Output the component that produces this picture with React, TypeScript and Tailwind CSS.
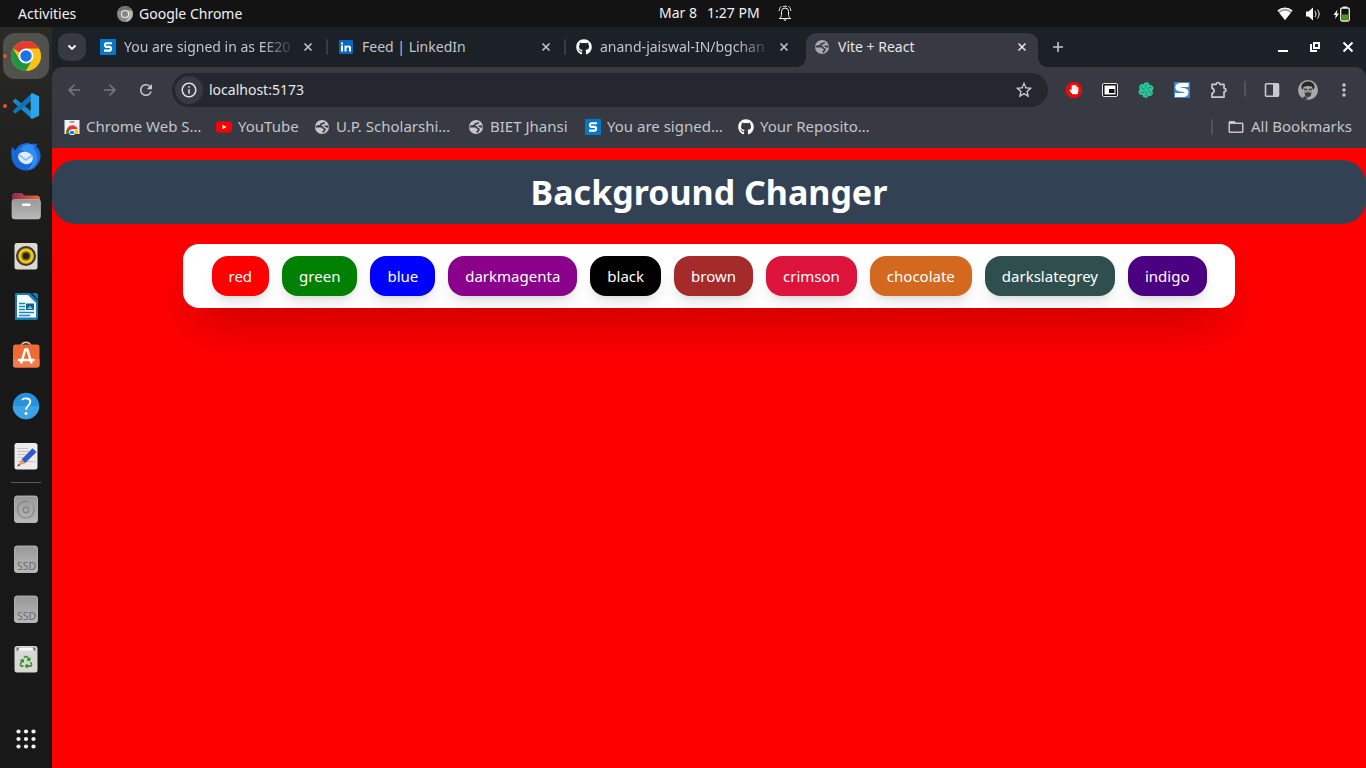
import React from "react";
import { FaGithub, FaHandPaper, FaRecycle } from "react-icons/fa";
import { MdStarBorder, MdRefresh, MdArrowBack, MdArrowForward, MdMoreVert, MdInfoOutline, MdFolderOpen } from "react-icons/md";

type IconProps = { className?: string };

const Globe = ({ className = "" }: IconProps) => (
  <svg viewBox="0 0 16 16" className={`size-4 shrink-0 ${className}`} aria-hidden="true">
    <circle cx="8" cy="8" r="7" fill="currentColor" />
    <path
      d="M10.600 3.200c-.6 1.500-1.600 1.600-3 1.600-.9 0-.4 1.300-1.400 1.700-1 .3-3.400.3-3.700 1.200h5c1.500 0 1.100 1.700 2.300 1.800 1.300.1 1.400 1.200.600 2.200L8.700 13.300"
      fill="none"
      stroke="#3a3c44"
      strokeWidth="1.700"
    />
    <path d="M10 6.500c1-.2 2.500.2 4.200 0l.3 2.200c-1.700.3-3.500-.5-4.500-2.200z" fill="#3a3c44" />
  </svg>
);

const SLogo = () => (
  <svg viewBox="0 0 16 16" className="size-4 shrink-0" aria-hidden="true">
    <rect width="16" height="16" fill="#0378c8" />
    <path d="M12 4.200H6L5 5.200v1.700l1 1h4l1 1v1.700l-1 1H4" fill="none" stroke="#fff" strokeWidth="2.100" />
  </svg>
);

const LinkedIn = () => (
  <svg viewBox="0 0 16 16" className="size-4 shrink-0" aria-hidden="true">
    <rect x="1" y="1" width="14" height="14" rx="1" fill="#0a66c2" />
    <path d="M3 6.500h2v6H3zM3 3.500h2v2H3zM6.500 6.500h1.900v.8c.9-1.400 4.600-1.400 4.600 1.500v3.700h-2V9.400c0-1.600-2.500-1.600-2.500 0v3.100h-2z" fill="#fff" />
  </svg>
);

const YouTube = () => (
  <svg viewBox="0 0 16 16" className="size-4 shrink-0" aria-hidden="true">
    <rect y="2.500" width="16" height="11" rx="3" fill="#f00" />
    <path d="M6.500 5.700v4.600l4-2.300z" fill="#fff" />
  </svg>
);

const ChromeWheel = () => (
  <g>
    <circle cx="16" cy="16" r="15" fill="#fbc116" />
    <path d="M16 16 3 8.500A15 15 0 0 1 29 8.500H16z" fill="#e33b2e" />
    <path d="M3 8.500A15 15 0 0 0 16 31l6.500-11.300L16 16 9.500 19.800z" fill="#229342" />
    <path d="M16 9h13a15 15 0 0 1-13 22l6.500-11.300z" fill="#fbc116" />
    <circle cx="16" cy="16" r="7.500" fill="#fff" />
    <circle cx="16" cy="16" r="5.700" fill="#1a73e8" />
  </g>
);

const WebStore = () => (
  <svg viewBox="0 0 16 16" className="size-4 shrink-0" aria-hidden="true">
    <rect x=".5" y="1" width="15" height="14" fill="#f1f1f1" />
    <rect x="5.500" y="2.200" width="5" height="1.300" rx=".6" fill="#777" />
    <path d="M2.300 15C1.500 5.500 11 3.500 13.700 10H8z" fill="#e33b2e" />
    <path d="M2.300 15c-.2-2 .1-3.500.8-5l3.400 5z" fill="#229342" />
    <path d="M8 10.500h5.900c.4 1.500.4 3 0 4.500H9z" fill="#fbc116" />
    <circle cx="8" cy="13.500" r="2.900" fill="#fff" />
    <path d="M5.900 15a2.300 2.300 0 1 1 4.200 0z" fill="#1a73e8" />
  </svg>
);

const Cross = ({ className = "" }: IconProps) => (
  <svg viewBox="0 0 16 16" className={`size-4 shrink-0 ${className}`} aria-hidden="true">
    <path d="m4.500 4.500 7 7m0-7-7 7" stroke="currentColor" strokeWidth="1.600" />
  </svg>
);

const tabs = [
  { title: "You are signed in as EE20", icon: <SLogo />, fade: true },
  { title: "Feed | LinkedIn", icon: <LinkedIn />, fade: false },
  { title: "anand-jaiswal-IN/bgchan", icon: <FaGithub className="size-4 shrink-0 text-white" />, fade: true },
];

const bookmarks = [
  { title: "Chrome Web S…", icon: <WebStore />, width: "w-[152px]" },
  { title: "YouTube", icon: <YouTube />, width: "w-[98px]" },
  { title: "U.P. Scholarshi…", icon: <Globe className="text-[#c4c6cc]" />, width: "w-[154px]" },
  { title: "BIET Jhansi", icon: <Globe className="text-[#c4c6cc]" />, width: "w-[117px]" },
  { title: "You are signed…", icon: <SLogo />, width: "w-[153px]" },
  { title: "Your Reposito…", icon: <FaGithub className="size-4 shrink-0 text-white" />, width: "w-[140px]" },
];

const colours = [
  { name: "red", fill: "bg-[red]" },
  { name: "green", fill: "bg-[green]" },
  { name: "blue", fill: "bg-[blue]" },
  { name: "darkmagenta", fill: "bg-[darkmagenta]" },
  { name: "black", fill: "bg-black" },
  { name: "brown", fill: "bg-[brown]" },
  { name: "crimson", fill: "bg-[crimson]" },
  { name: "chocolate", fill: "bg-[chocolate]" },
  { name: "darkslategrey", fill: "bg-[darkslategrey]" },
  { name: "indigo", fill: "bg-[indigo]" },
];

const Drive = ({ children }: { children: React.ReactNode }) => (
  <g>
    <rect x="4.500" y="3" width="23" height="26.500" rx="2.500" fill="url(#drive)" stroke="#c4c4c4" strokeWidth=".8" />
    {children}
  </g>
);

const ssd = (
  <Drive>
    <text x="7" y="26.500" fontSize="10.500" fill="#6b6b6b" fontFamily="Noto Sans, sans-serif">SSD</text>
  </Drive>
);

const apps = [
  { name: "Google Chrome", art: <ChromeWheel />, running: true, active: true },
  {
    name: "Visual Studio Code",
    running: true,
    art: (
      <g>
        <path d="m3 10.500 2.300-2 17 13.500v7.200L3.200 12z" fill="#1a86cc" />
        <path d="m3 21.800 2.300 2L22.300 10V3L3.200 20.400z" fill="#0b74bd" />
        <path d="m22 3 7 3.200v19.600l-7 3.200-1.300-1.200V4.200z" fill="#2aa5ee" />
      </g>
    ),
  },
  {
    name: "Thunderbird",
    art: (
      <g>
        <path d="M1.500 14c-1-3 .5-6 1.500-7.500.3 2 1 3 2.500 3.500 3-5.500 10-9 16-6 2-.3 5-.5 6.500 1-1 0-2 .3-2 1 3.500 3 5 7 4.500 11C29.500 25.500 23 31 15.500 30.500 7 30 .500 23 1.500 14z" fill="#1968d9" />
        <path d="M10 10c4-7 11-7 16-3-2-.5-3 0-3 1 8 8 5 19-5 22 8-9 5-17-8-20z" fill="#2f8df2" />
        <path d="M8.500 14.500c3-4.500 12-3 14 2 1.500 5-3 8.500-7.500 7.500s-8-5-6.500-9.500z" fill="#dcecfb" />
        <path d="m9 14.500 6.500 5.500 7-4.500" fill="none" stroke="#8db9e7" strokeWidth="1.500" />
      </g>
    ),
  },
  {
    name: "Files",
    art: (
      <g>
        <path d="M2 7a3 3 0 0 1 3-4h7l2.500 2.500H27A3 3 0 0 1 30 8v10H2z" fill="url(#folder)" />
        <rect x="2" y="9.500" width="28.500" height="19.500" rx="2.500" fill="url(#drive)" stroke="#bdbdbd" strokeWidth=".6" />
        <rect x="12" y="13.500" width="8.500" height="2.500" rx="1" fill="#fff" />
      </g>
    ),
  },
  {
    name: "Rhythmbox",
    art: (
      <g>
        <rect x="4.500" y="3" width="23" height="26.500" rx="2.500" fill="#ddd9d1" />
        <circle cx="16" cy="16" r="10" fill="#3b3a38" />
        <circle cx="16" cy="16" r="7.800" fill="#f3c511" />
        <circle cx="16" cy="16" r="4.800" fill="#8d7210" />
        <circle cx="16" cy="16" r="3.300" fill="#222" />
      </g>
    ),
  },
  {
    name: "LibreOffice Writer",
    art: (
      <g>
        <path d="M6 3h14l8 8v17a2 2 0 0 1-2 2H6a1 1 0 0 1-1-1V4a1 1 0 0 1 1-1z" fill="#137eb5" />
        <path d="M7 5h11l8 8v14.500H7z" fill="#f5fbff" />
        <path d="M22 3h4a2 2 0 0 1 2 2v5z" fill="#137eb5" />
        <path d="M9 13.500h6m-6 3h6m-6 3h6m-6 3h15m-15 3h11" stroke="#1887bd" strokeWidth="1.500" />
        <rect x="16" y="13.500" width="8" height="6.500" fill="#155e89" />
        <path d="m17 19 3-3 3 3z" fill="#7cc7ea" />
      </g>
    ),
  },
  {
    name: "Ubuntu Software",
    art: (
      <g>
        <path d="M11 6.500c0-5.500 10-5.500 10 0" fill="none" stroke="#d9c7a6" strokeWidth="1.600" />
        <rect x="3" y="4.500" width="26.500" height="23" rx="2.500" fill="#f06a33" />
        <path d="M3 19h26.500v6a2.500 2.500 0 0 1-2.500 2.500H5.500A2.500 2.500 0 0 1 3 25z" fill="#f47b47" />
        <path d="m11 23.500 4.300-14h2l4.300 14M8 20h16.500" fill="none" stroke="#fff" strokeWidth="2.500" />
      </g>
    ),
  },
  {
    name: "Help",
    art: (
      <g>
        <circle cx="16" cy="16" r="13.200" fill="#2692df" />
        <path d="M2.800 16a13.200 13.200 0 0 0 26.400 0z" fill="#3ba2e5" />
        <path d="M12 9.800c2-2 8.300-2.200 8.300 2 0 3.700-4.300 4-4.300 8" fill="none" stroke="#fff" strokeWidth="1.900" />
        <circle cx="16" cy="23.500" r="1.500" fill="#fff" />
      </g>
    ),
  },
  {
    name: "Text Editor",
    art: (
      <g>
        <rect x="4.500" y="3" width="23" height="26.500" rx="2.500" fill="#ecebe9" />
        <path d="M7.500 8.500H18m-10.500 3H19m-11.500 3h8m-8 3h6m-6 4h18" stroke="#c6c4bd" strokeWidth="1.200" />
        <path d="m11.500 19.500 11-11.300 4 3.800L15 23.300z" fill="#2e59d1" />
        <path d="m11.500 19.500 3.500 3.800-7.500 3z" fill="#e79b58" />
        <path d="m8.500 24 1.600 1.400-2.800 1.100z" fill="#333" />
      </g>
    ),
  },
];

const volumes = [
  {
    name: "Disk",
    art: (
      <Drive>
        <path d="M23 12.500A8.300 8.300 0 1 1 19 9" fill="none" stroke="#858585" strokeWidth="1.200" />
        <circle cx="16" cy="17" r="2.800" fill="none" stroke="#858585" strokeWidth="1.300" />
      </Drive>
    ),
  },
  { name: "SSD volume 1", art: ssd },
  { name: "SSD volume 2", art: ssd },
  {
    name: "Trash",
    art: (
      <g>
        <rect x="4.500" y="3" width="23" height="26.500" rx="2.500" fill="#d8d8d6" />
        <path d="M6.500 4.500h19v4l-2-2h-15l-2 2z" fill="#777" />
        <rect x="9" y="4.500" width="14" height="3" rx="1" fill="#fafafa" />
        <FaRecycle x="9.500" y="12.500" size={13} color="#2f9423" />
      </g>
    ),
  },
];

function DockItem({ name, art, running, active }: { name: string; art: React.ReactNode; running?: boolean; active?: boolean }) {
  return (
    <button aria-label={name} className="relative flex h-[50px] w-full items-center justify-center">
      <span className={`flex size-[46px] items-center justify-center rounded-xl ${active ? "bg-[#50504d]" : ""}`}>
        <svg viewBox="0 0 32 32" className="size-8" aria-hidden="true">{art}</svg>
      </span>
      {running && <span className="absolute left-[3px] top-[23px] size-1 rounded-full bg-[#e95420]" />}
    </button>
  );
}

function TopBar() {
  return (
    <header className="flex h-[27px] shrink-0 items-center bg-[#131313] text-sm text-[#f2f2f2]">
      <div className="flex flex-1 items-center pl-[18px]">
        <button className="w-[99px] text-left">Activities</button>
        <button className="flex items-center gap-1.5">
          <svg viewBox="0 0 16 16" className="size-4" aria-hidden="true">
            <circle cx="8" cy="8" r="8" fill="#8b8b8b" />
            <path d="M1 4.500a8 8 0 0 1 14 0H8z" fill="#707070" />
            <path d="M8 4.500h7A8 8 0 0 1 8.500 16l3-6z" fill="#b4b4b4" />
            <circle cx="8" cy="8" r="4" fill="#eee" />
            <circle cx="8" cy="8" r="3" fill="#858585" />
          </svg>
          Google Chrome
        </button>
      </div>
      <button className="flex items-center pb-0.5 pl-[84px]">
        <span className="w-12 text-left">Mar 8</span>
        <span className="w-[70px] text-left">1:27 PM</span>
        <svg viewBox="0 0 16 16" className="size-4" fill="none" stroke="#f2f2f2" aria-hidden="true">
          <path d="M2 13.500h12M3 13.200c1-1 1.500-2 1.500-4V6.500a3.500 3.500 0 0 1 7 0v2.700c0 2 .5 3 1.500 4M2.200 6c0-2 .8-3.500 2.200-4.700M13.800 6c0-2-.8-3.500-2.200-4.700M6 1.800c1-.9 3-.9 4 0" />
          <path d="M6 14.500h4L8 16z" fill="#f2f2f2" stroke="none" />
        </svg>
      </button>
      <div className="flex flex-1 items-center justify-end gap-3 pr-4">
        <svg viewBox="0 0 16 16" className="size-4" aria-hidden="true">
          <path d="M.8 5.200C5 1 11 1 15.200 5.200L8 14z" fill="#9b9b9b" />
          <path d="M2.500 7c3.500-3 7.500-3 11 0L8 14z" fill="#fff" />
          <path d="M.8 5C5 1.200 11 1.200 15.200 5" fill="none" stroke="#fff" strokeWidth="1.300" />
        </svg>
        <svg viewBox="0 0 16 16" className="size-4" fill="none" stroke="#fff" aria-hidden="true">
          <path d="M1 5.500h2.500L8 1.500v13L3.500 10.500H1z" fill="#fff" stroke="none" />
          <path d="M9.800 5c1.500 1.800 1.500 4.200 0 6M12.300 3.500c2.400 2.700 2.400 6.300 0 9" />
        </svg>
        <svg viewBox="0 0 17 16" className="h-4 w-[17px]" aria-hidden="true">
          <path d="M4.500 3.500.5 9h2.300l-.7 4L6 7.500H3.700z" fill="#fff" />
          <rect x="7.700" y="2" width="8.600" height="13" rx="1.500" fill="none" stroke="#eee" strokeWidth="1.300" />
          <path d="M10 .5h4V2h-4z" fill="#eee" />
          <path d="M9 8.500h6V14H9z" fill="#4e9a06" />
        </svg>
      </div>
    </header>
  );
}

function Dock() {
  return (
    <nav aria-label="Dock" className="flex w-[52px] shrink-0 flex-col items-center bg-linear-to-b from-[#2a2a26] via-[#171817] via-35% to-[#171817] pt-1 pb-1">
      <svg className="absolute size-0" aria-hidden="true">
        <defs>
          <linearGradient id="drive" x1="0" y1="0" x2="0" y2="1"><stop stopColor="#989898" /><stop offset="1" stopColor="#b9b9b9" /></linearGradient>
          <linearGradient id="folder"><stop stopColor="#8a2855" /><stop offset="1" stopColor="#ee6637" /></linearGradient>
        </defs>
      </svg>
      {apps.map((a) => <DockItem key={a.name} {...a} />)}
      <div className="my-px h-px w-[30px] shrink-0 bg-[#5a5a5a]" />
      {volumes.map((v) => <DockItem key={v.name} {...v} />)}
      <button aria-label="Show Applications" className="mt-auto flex h-[50px] w-full items-center justify-center">
        <svg viewBox="0 0 20 20" className="size-5" fill="#f3f3f3" aria-hidden="true">
          {[2.5, 10, 17.5].map((y) => [2.5, 10, 17.5].map((x) => <circle key={`${x}-${y}`} cx={x} cy={y} r="2.100" />))}
        </svg>
      </button>
    </nav>
  );
}

function TabStrip() {
  return (
    <div className="flex h-10 shrink-0 items-end bg-[#1c2027] pl-1.5 text-sm text-[#c3c5ca]">
      <button aria-label="Search tabs" className="mb-1.5 mr-1.5 flex size-7 shrink-0 items-center justify-center rounded-[10px] bg-[#383a43] text-white">
        <svg viewBox="0 0 16 16" className="size-4" fill="none" stroke="currentColor" strokeWidth="1.800" aria-hidden="true"><path d="m4.500 6.500 3.500 3.500 3.500-3.500" /></svg>
      </button>
      {tabs.map((t, i) => (
        <React.Fragment key={t.title}>
          <div className="flex h-[34px] w-[232px] items-center gap-1 px-2 pb-1.5">
            <div className="flex h-7 min-w-0 flex-1 items-center gap-2">
              {t.icon}
              <span className={`flex-1 overflow-hidden whitespace-nowrap ${t.fade ? "mask-r-from-80%" : ""}`}>{t.title}</span>
            </div>
            <button aria-label={`Close ${t.title}`}><Cross /></button>
          </div>
          <div className={`mx-0.5 mb-3 h-4 w-0.5 shrink-0 rounded-full ${i < 2 ? "bg-[#393c43]" : ""}`} />
        </React.Fragment>
      ))}
      <div className="relative flex h-[34px] w-[232px] items-center gap-2 rounded-t-[10px] bg-[#383a43] px-2 pb-1.5 text-[#e4e5e8]">
        <span className="absolute bottom-0 right-full size-2.5 bg-[radial-gradient(circle_at_0_0,transparent_10px,#383a43_10px)]" />
        <span className="absolute bottom-0 left-full size-2.5 bg-[radial-gradient(circle_at_100%_0,transparent_10px,#383a43_10px)]" />
        <Globe className="text-[#a5a9b1]" />
        <span className="flex-1 whitespace-nowrap">Vite + React</span>
        <button aria-label="Close Vite + React"><Cross /></button>
      </div>
      <button aria-label="New tab" className="mb-1.5 ml-1.5 flex size-7 items-center justify-center">
        <svg viewBox="0 0 16 16" className="size-4" stroke="currentColor" strokeWidth="1.600" aria-hidden="true"><path d="M8 3v10M3 8h10" /></svg>
      </button>
      <div className="mb-3 ml-auto flex gap-4 pr-2.5 text-white">
        <button aria-label="Minimise"><svg viewBox="0 0 16 16" className="size-4" aria-hidden="true"><path d="M2 11h10v2H2z" fill="currentColor" /></svg></button>
        <button aria-label="Restore">
          <svg viewBox="0 0 16 16" className="size-4" fill="none" stroke="currentColor" strokeWidth="2" aria-hidden="true"><path d="M6 4h5v5H6zM3 5v7h6" /></svg>
        </button>
        <button aria-label="Close window"><svg viewBox="0 0 16 16" className="size-4" aria-hidden="true"><path d="m3.500 3.500 9 9M12.500 3.500l-9 9" stroke="currentColor" strokeWidth="2" /></svg></button>
      </div>
    </div>
  );
}

const toolButton = "flex h-[34px] w-9 shrink-0 items-center justify-center";
const petals = [0, 60, 120, 180, 240, 300];

function Toolbar() {
  return (
    <div className="flex h-10 shrink-0 items-end pl-1 pr-1 text-[#c7c9cf]">
      <button aria-label="Back" className={`${toolButton} text-[#767881]`}><MdArrowBack className="size-[18px]" /></button>
      <button aria-label="Forward" className={`${toolButton} text-[#767881]`}><MdArrowForward className="size-[18px]" /></button>
      <button aria-label="Reload" className={toolButton}><MdRefresh className="size-[18px]" /></button>
      <div className="mx-2 flex h-[34px] flex-1 items-center rounded-full bg-[#24272e] pl-[3px] pr-3.5">
        <button aria-label="Site information" className="flex size-7 items-center justify-center rounded-full bg-[#383a43]"><MdInfoOutline className="size-[18px] text-[#e3e3e3]" /></button>
        <input aria-label="Address" defaultValue="localhost:5173" className="ml-1.5 min-w-0 flex-1 bg-transparent text-sm text-[#e8e8ea] outline-none" />
        <button aria-label="Bookmark this tab"><MdStarBorder className="size-5" /></button>
      </div>
      <button aria-label="Ad blocker" className={toolButton}>
        <svg viewBox="0 0 16 16" className="size-4" aria-hidden="true">
          <path d="M4.700 0h6.600L16 4.700v6.600L11.300 16H4.700L0 11.300V4.700z" fill="#e40d0d" />
          <FaHandPaper x="3" y="2.500" size={10} color="#fff" />
        </svg>
      </button>
      <button aria-label="Picture in picture" className={toolButton}>
        <svg viewBox="0 0 16 16" className="size-4" aria-hidden="true">
          <rect x=".5" y="1.500" width="15" height="13" rx="1.500" fill="#111" stroke="#e8e8e8" />
          <path d="M2.500 3.500h11v9h-11z" fill="#fff" />
          <path d="M7 7h5.500v4H7z" fill="#111" />
        </svg>
      </button>
      <button aria-label="Assistant" className={toolButton}>
        <svg viewBox="0 0 16 16" className="size-4" aria-hidden="true">
          <circle cx="8" cy="8" r="6" fill="#2cc795" />
          {petals.map((a) => (
            <g key={a} transform={`rotate(${a} 8 8)`}>
              <circle cx="8.500" cy="3.200" r="3" fill="#2cc795" />
              <path d="M8 6.200c-1.200-1.500-.8-3.500 1-4.200" fill="none" stroke="#1b7d66" strokeWidth=".8" />
            </g>
          ))}
        </svg>
      </button>
      <button aria-label="S extension" className={toolButton}>
        <svg viewBox="0 0 16 16" className="size-4" aria-hidden="true">
          <rect width="16" height="16" fill="#3f87c5" />
          <path d="M14.500 3H7.500C2 3 2 7.300 6.500 7.600l3 .4c4.500.5 3.500 5-.5 5H1" fill="none" stroke="#fff" strokeWidth="4" />
        </svg>
      </button>
      <button aria-label="Extensions" className={toolButton}>
        <svg viewBox="0 0 18 18" className="size-[18px]" fill="none" stroke="currentColor" strokeWidth="1.700" strokeLinejoin="round" aria-hidden="true">
          <path d="M3 3.300h4.200c0-2.400 3.600-2.400 3.600 0H15v4c2.500 0 2.500 3.600 0 3.600v5.300H3v-3.900c2.800-.3 2.800-4.700 0-5z" />
        </svg>
      </button>
      <div className="mb-2.5 ml-2 mr-2 h-4 w-0.5 rounded-full bg-[#50535b]" />
      <button aria-label="Side panel" className={toolButton}>
        <svg viewBox="0 0 16 16" className="size-4" aria-hidden="true">
          <rect x="1.500" y="1.800" width="13" height="12.500" rx="1" fill="none" stroke="currentColor" strokeWidth="1.600" />
          <path d="M9 1.500h5.500v13H9z" fill="currentColor" />
        </svg>
      </button>
      <button aria-label="Profile" className={toolButton}>
        <svg viewBox="0 0 20 20" className="size-5" aria-hidden="true">
          <circle cx="10" cy="10" r="10" fill="#a9a9a9" />
          <path d="M3.500 8C3 4 6 1.500 10 1.500S17 4 16.500 8l-1.500 2-1-3.500L9 6 5.500 7l-.5 3z" fill="#262626" />
          <path d="M6 8.500h8l-.5 5L10 16.500l-3.500-3z" fill="#8d8d8d" />
          <path d="M6 8.800h3v1.200H6zM11 8.800h3v1.200h-3zM6.500 12.500l1 .500 2.500-.700 2.500.700 1-.500-1 3.500-2.500 1.500-2.500-1.500zM4 18l3.500-2 2.500 3.500a10 10 0 0 1-6-1.500z" fill="#3b3b3b" />
        </svg>
      </button>
      <button aria-label="Menu" className={toolButton}><MdMoreVert className="size-5" /></button>
    </div>
  );
}

function Bookmarks() {
  return (
    <div className="flex h-[41px] shrink-0 items-center pb-0.5 pl-3 pr-3.5 text-[15px] text-[#c3c5ca]">
      {bookmarks.map((b) => (
        <a key={b.title} href="#" className={`flex shrink-0 items-center gap-1.5 whitespace-nowrap ${b.width}`}>{b.icon}{b.title}</a>
      ))}
      <div className="ml-auto mr-3.5 h-4 w-0.5 rounded-full bg-[#50535b]" />
      <a href="#" className="flex items-center gap-1.5 whitespace-nowrap"><MdFolderOpen className="size-[18px]" />All Bookmarks</a>
    </div>
  );
}

export default function App() {
  return (
    <div className="flex h-screen flex-col overflow-hidden font-['Noto_Sans',sans-serif]">
      <TopBar />
      <div className="flex min-h-0 flex-1">
        <Dock />
        <div className="flex min-w-0 flex-1 flex-col bg-[#1c2027]">
          <TabStrip />
          <div className="rounded-t-[10px] bg-[#383a43]">
            <Toolbar />
            <Bookmarks />
          </div>
          <main className="flex-1 bg-[red] pt-3">
            <h1 className="flex h-16 items-center justify-center rounded-3xl bg-[#334155] text-[34px] font-bold text-white">Background Changer</h1>
            <div className="mx-auto mt-5 flex w-4/5 items-center justify-center gap-[13px] rounded-2xl bg-white py-3 shadow-2xl">
              {colours.map((c) => (
                <button key={c.name} className={`h-10 rounded-2xl px-[17px] text-[15px] text-white shadow-lg ${c.fill}`}>{c.name}</button>
              ))}
            </div>
          </main>
        </div>
      </div>
    </div>
  );
}
